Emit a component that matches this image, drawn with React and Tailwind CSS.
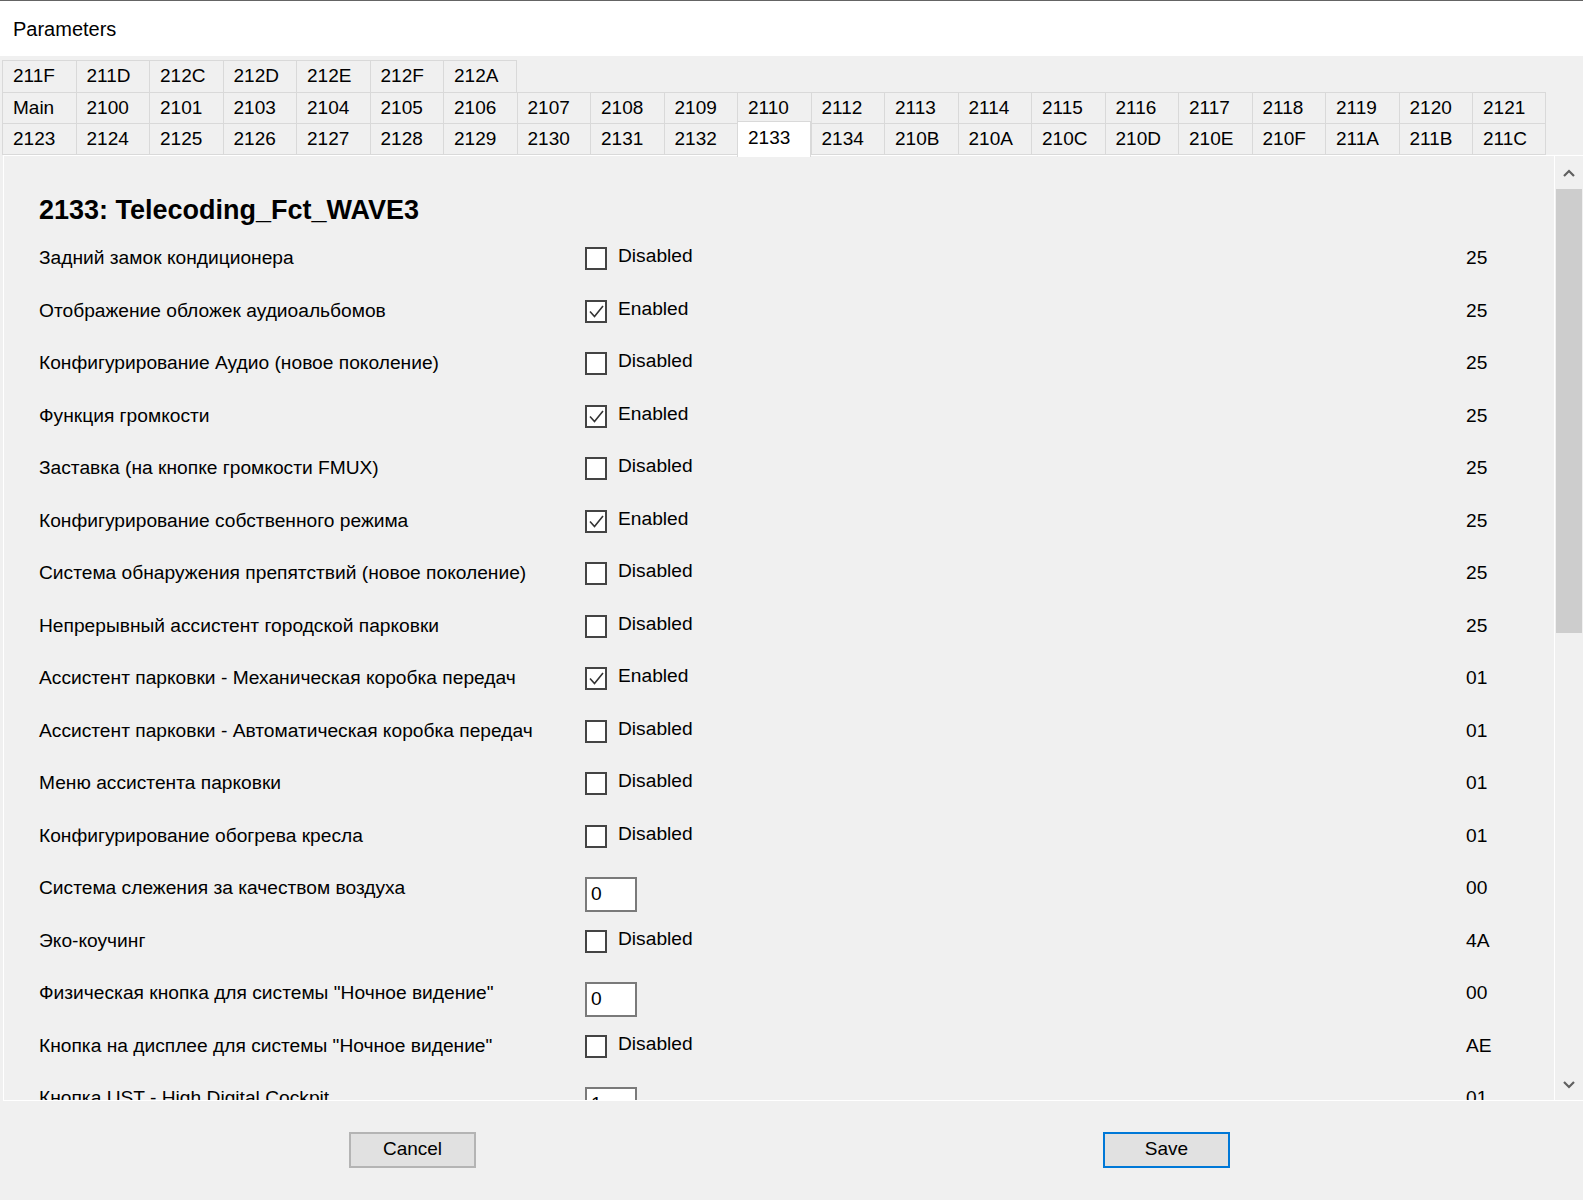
import React, { useState } from 'react';

const tabRows = [
  ['211F', '211D', '212C', '212D', '212E', '212F', '212A'],
  ['Main', '2100', '2101', '2103', '2104', '2105', '2106', '2107', '2108', '2109', '2110', '2112', '2113', '2114', '2115', '2116', '2117', '2118', '2119', '2120', '2121'],
  ['2123', '2124', '2125', '2126', '2127', '2128', '2129', '2130', '2131', '2132', '2133', '2134', '210B', '210A', '210C', '210D', '210E', '210F', '211A', '211B', '211C'],
];

const parameters = [
  { label: 'Задний замок кондиционера', type: 'check', value: false, code: '25' },
  { label: 'Отображение обложек аудиоальбомов', type: 'check', value: true, code: '25' },
  { label: 'Конфигурирование Аудио (новое поколение)', type: 'check', value: false, code: '25' },
  { label: 'Функция громкости', type: 'check', value: true, code: '25' },
  { label: 'Заставка (на кнопке громкости FMUX)', type: 'check', value: false, code: '25' },
  { label: 'Конфигурирование собственного режима', type: 'check', value: true, code: '25' },
  { label: 'Система обнаружения препятствий (новое поколение)', type: 'check', value: false, code: '25' },
  { label: 'Непрерывный ассистент городской парковки', type: 'check', value: false, code: '25' },
  { label: 'Ассистент парковки - Механическая коробка передач', type: 'check', value: true, code: '01' },
  { label: 'Ассистент парковки - Автоматическая коробка передач', type: 'check', value: false, code: '01' },
  { label: 'Меню ассистента парковки', type: 'check', value: false, code: '01' },
  { label: 'Конфигурирование обогрева кресла', type: 'check', value: false, code: '01' },
  { label: 'Система слежения за качеством воздуха', type: 'input', value: '0', code: '00' },
  { label: 'Эко-коучинг', type: 'check', value: false, code: '4A' },
  { label: 'Физическая кнопка для системы "Ночное видение"', type: 'input', value: '0', code: '00' },
  { label: 'Кнопка на дисплее для системы "Ночное видение"', type: 'check', value: false, code: 'AE' },
  { label: 'Кнопка UST - High Digital Cockpit', type: 'input', value: '1', code: '01' },
];

function CheckBox({ checked }) {
  return (
    <span className="flex items-center">
      <span className="w-[22px] h-[23px] border-2 border-[#444] bg-white flex items-center justify-center">
        {checked && (
          <svg width="17" height="15" viewBox="0 0 17 15">
            <polyline points="2,7.5 6.5,12.5 15,2" fill="none" stroke="#333" strokeWidth="1.6" />
          </svg>
        )}
      </span>
      <span className="ml-[11px] mb-[4px]">{checked ? 'Enabled' : 'Disabled'}</span>
    </span>
  );
}

function Chevron({ up }) {
  return (
    <svg width="12" height="8" viewBox="0 0 12 8">
      <polyline
        points={up ? '1,7 6,2 11,7' : '1,1 6,6 11,1'}
        fill="none"
        stroke="#606060"
        strokeWidth="2.2"
      />
    </svg>
  );
}

export default function App() {
  const [active, setActive] = useState('2133');

  return (
    <div className="w-[1583px] h-[1200px] bg-[#f0f0f0] flex flex-col text-black text-[19.2px] font-['Liberation_Sans',Arial,sans-serif] overflow-hidden">
      <div className="h-px bg-[#646464]" />
      <div className="h-[55px] bg-white flex items-center pl-[13px] text-[20px]">Parameters</div>

      {/* tab strip */}
      <div className="pt-[4px] px-[2px] text-[19px]">
        {tabRows.map((row, r) => (
          <div key={r} className="flex h-[31.5px]">
            {row.map((tab, i) => {
              const selected = tab === active;
              return (
                <div
                  key={tab}
                  onClick={() => setActive(tab)}
                  className={
                    selected
                      ? 'relative z-10 w-[73.5px] h-[35.5px] -mt-[2px] bg-white border-l border-t border-r border-[#d9d9d9] flex items-center pl-[10px] pb-[3px]'
                      : `w-[73.5px] h-[31.5px] border-l border-t border-[#d9d9d9] flex items-center pl-[10px] ${i === row.length - 1 ? 'border-r' : ''} ${r === 2 ? 'border-b' : ''}`
                  }
                >
                  {tab}
                </div>
              );
            })}
          </div>
        ))}
      </div>

      {/* tab page */}
      <div className="ml-[3px] h-[946px] border-t border-l border-b border-white flex">
        <div className="flex-1 overflow-hidden pl-[35px]">
          <div className="mt-[40px] h-[30px] flex items-center font-bold text-[27px]">2133: Telecoding_Fct_WAVE3</div>
          <div className="mt-[7px]">
            {parameters.map((p) => (
              <div key={p.label} className="h-[52.5px] flex items-center">
                <div className="w-[546px]">{p.label}</div>
                <div className="flex-1 flex items-center">
                  {p.type === 'check' ? (
                    <CheckBox checked={p.value} />
                  ) : (
                    <div className="mt-[11px] w-[52px] h-[35px] bg-white border-2 border-[#7a7a7a] flex items-center pl-[4px]">
                      {p.value}
                    </div>
                  )}
                </div>
                <div className="w-[88px]">{p.code}</div>
              </div>
            ))}
          </div>
        </div>

        {/* vertical scrollbar */}
        <div className="w-[29px] border-l border-white flex flex-col pt-[2px]">
          <div className="h-[31px] flex items-center justify-center">
            <Chevron up />
          </div>
          <div className="h-[444px] mx-[1px] bg-[#cdcdcd]" />
          <div className="flex-1" />
          <div className="h-[30px] flex items-center justify-center">
            <Chevron />
          </div>
        </div>
      </div>

      {/* dialog buttons */}
      <div className="flex pt-[31px] pl-[349px]">
        <button className="w-[127px] h-[36px] bg-[#e1e1e1] border-2 border-[#b4b4b4] text-[19px]">Cancel</button>
        <button className="ml-[627px] w-[127px] h-[36px] bg-[#e1e1e1] border-2 border-[#0078d7] text-[19px]">Save</button>
      </div>
    </div>
  );
}
